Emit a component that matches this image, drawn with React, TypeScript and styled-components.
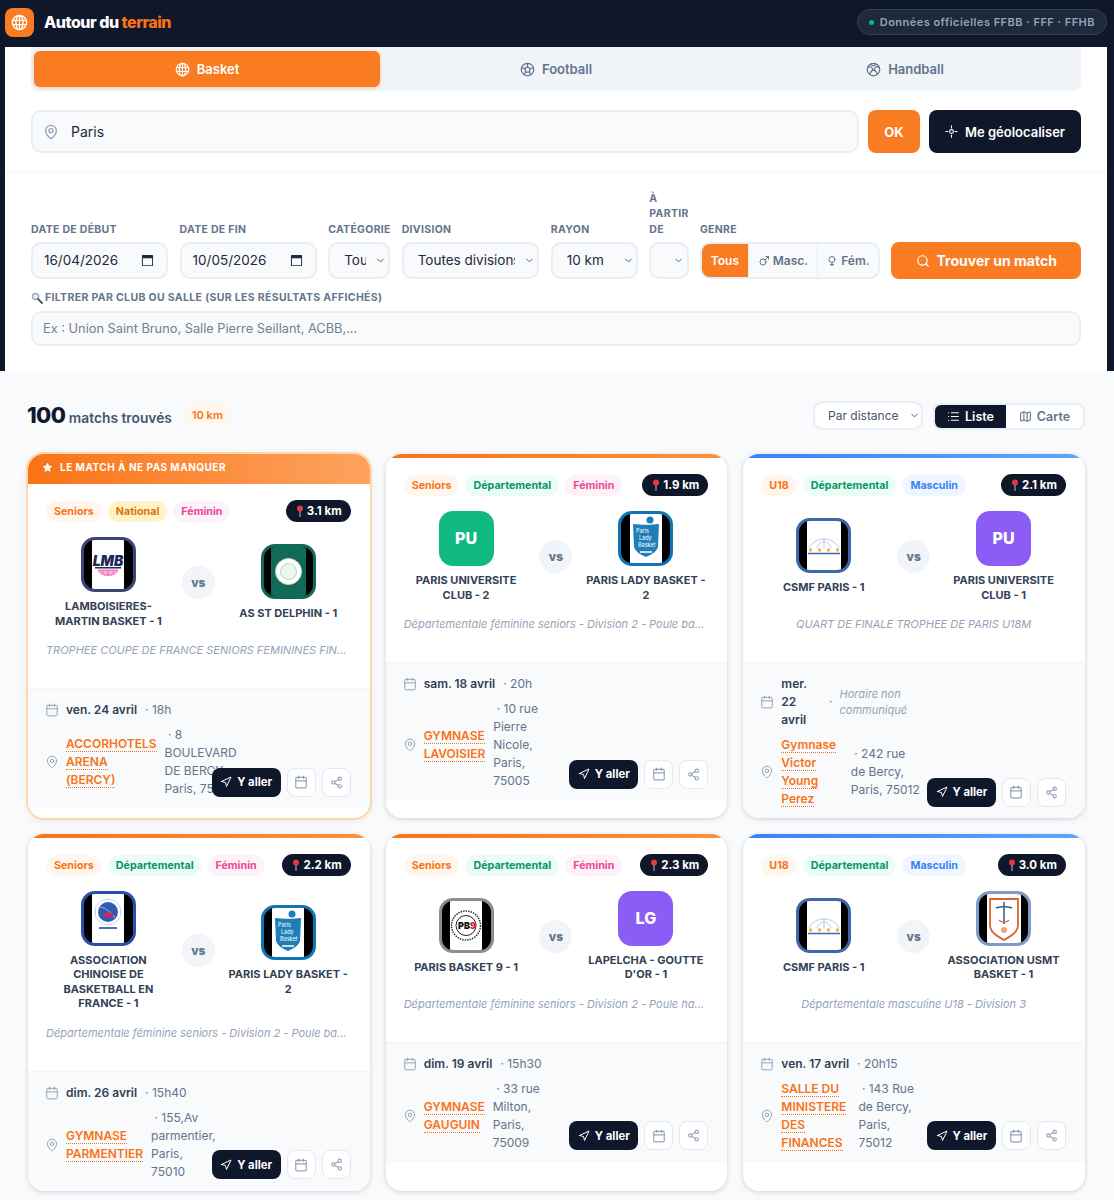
import React from "react";
import styled, { createGlobalStyle } from "styled-components";
import {
  Calendar,
  ChevronDown,
  List,
  Map as MapIcon,
  MapPin,
  Mars,
  Navigation,
  Search,
  Share2,
  Star,
  Venus,
} from "lucide-react";

const GlobalStyle = createGlobalStyle`
  * { box-sizing: border-box; }
  body {
    margin: 0;
    background: #f8fafc;
    color: #0f172a;
    font-family: Inter, "Liberation Sans", sans-serif;
  }
  input, select, button { font-family: inherit; }
`;

const Page = styled.div`
  width: 1114px;
`;

const Header = styled.header`
  height: 47px;
  background: #0f172a;
  display: flex;
  align-items: center;
  justify-content: space-between;
  padding: 0 7px 3px 5px;
`;

const Brand = styled.div`
  display: flex;
  align-items: center;
  gap: 10px;
`;

const BrandLogo = styled.div`
  width: 29px;
  height: 29px;
  border-radius: 8px;
  background: #f97b22;
  color: #fff;
  display: flex;
  align-items: center;
  justify-content: center;
`;

const BrandName = styled.div`
  font-size: 16px;
  font-weight: 800;
  letter-spacing: -0.5px;
  color: #fff;
  span {
    color: #f97316;
  }
`;

const SourceBadge = styled.div`
  height: 26px;
  display: flex;
  align-items: center;
  gap: 6px;
  padding: 0 11px;
  border-radius: 13px;
  background: #1e293b;
  border: 1px solid #334155;
  color: #94a3b8;
  font-size: 11px;
  font-weight: 600;
  letter-spacing: 0.47px;
  i {
    width: 5px;
    height: 5px;
    border-radius: 50%;
    background: #10b981;
  }
`;

const PanelWrap = styled.div`
  background: #0f172a;
  padding: 0 7px 0 5px;
`;

const Panel = styled.section`
  background: #fff;
`;

const SearchBlock = styled.div`
  padding: 0 26px 19px;
  border-bottom: 1px solid #f1f5f9;
`;

const SportTabs = styled.div`
  display: grid;
  grid-template-columns: repeat(3, 1fr);
  gap: 3px;
  height: 44px;
  padding: 4px 3px;
  background: #f1f5f9;
  border-radius: 0 0 8px 8px;
  margin-bottom: 19px;
`;

const SportTab = styled.button<{ $active?: boolean }>`
  display: flex;
  align-items: center;
  justify-content: center;
  gap: 7px;
  border: 0;
  border-radius: 6px;
  font-size: 13px;
  font-weight: 600;
  background: ${(p) => (p.$active ? "#f97b22" : "transparent")};
  color: ${(p) => (p.$active ? "#fff" : "#64748b")};
  box-shadow: ${(p) => (p.$active ? "0 1px 4px rgba(249,115,22,.35)" : "none")};
`;

const SearchRow = styled.div`
  display: flex;
  gap: 9px;
`;

const SearchField = styled.div`
  position: relative;
  flex: 1;
  svg {
    position: absolute;
    left: 12px;
    top: 14px;
    color: #94a3b8;
  }
`;

const SearchInput = styled.input`
  width: 100%;
  height: 43px;
  border: 2px solid #e8eef6;
  border-radius: 10px;
  background: #f8fafc;
  padding: 0 38px;
  font-size: 14px;
  color: #1e293b;
  outline: none;
`;

const OkButton = styled.button`
  width: 52px;
  height: 43px;
  border: 0;
  border-radius: 8px;
  background: #f97b22;
  color: #fff;
  font-size: 13px;
  font-weight: 700;
`;

const GeoButton = styled.button`
  width: 152px;
  height: 43px;
  border: 0;
  border-radius: 8px;
  background: #0f172a;
  color: #fff;
  font-size: 13px;
  font-weight: 600;
  display: flex;
  align-items: center;
  justify-content: center;
  gap: 7px;
`;

const FilterBlock = styled.div`
  padding: 18px 26px 25px;
`;

const FilterRow = styled.div`
  display: flex;
  align-items: flex-end;
  gap: 11.57px;
  margin-bottom: 11px;
`;

const Field = styled.label<{ $w: number }>`
  display: flex;
  flex-direction: column;
  gap: 5px;
  width: ${(p) => p.$w}px;
  flex: none;
`;

const FieldLabel = styled.span`
  font-size: 10.5px;
  line-height: 15.4px;
  font-weight: 700;
  letter-spacing: 0.3px;
  text-transform: uppercase;
  color: #64748b;
`;

const DateBox = styled.div`
  height: 37px;
  border: 2px solid #e8eef6;
  border-radius: 10px;
  background: #f8fafc;
  display: flex;
  align-items: center;
  justify-content: space-between;
  padding: 0 12px 1px 11px;
  font-size: 13.5px;
  color: #1e293b;
`;

const SelectWrap = styled.div`
  position: relative;
  svg {
    position: absolute;
    right: 4px;
    top: 13px;
    color: #475569;
    pointer-events: none;
  }
`;

const NativeSelect = styled.select`
  appearance: none;
  width: 100%;
  height: 37px;
  border: 2px solid #e8eef6;
  border-radius: 10px;
  background: #f8fafc;
  padding: 0 22px 1px 14px;
  font-size: 13.5px;
  color: #1e293b;
  outline: none;
`;

const GenreGroup = styled.div`
  height: 37px;
  display: flex;
  border: 2px solid #e8eef6;
  border-radius: 10px;
  background: #f8fafc;
  overflow: hidden;
`;

const GenreOption = styled.button<{ $active?: boolean; $w: number }>`
  width: ${(p) => p.$w}px;
  flex: none;
  border: 0;
  border-right: 1px solid #e8eef6;
  display: flex;
  align-items: center;
  justify-content: center;
  gap: 3px;
  padding: 0;
  font-size: 12px;
  font-weight: 600;
  background: ${(p) => (p.$active ? "#f97b22" : "transparent")};
  color: ${(p) => (p.$active ? "#fff" : "#64748b")};
  &:last-child {
    border-right: 0;
  }
`;

const FindButton = styled.button`
  flex: 1;
  height: 37px;
  border: 0;
  border-radius: 8px;
  background: #f97b22;
  color: #fff;
  font-size: 14px;
  font-weight: 700;
  display: flex;
  align-items: center;
  justify-content: center;
  gap: 7px;
`;

const ClubLabel = styled(FieldLabel)`
  display: flex;
  align-items: center;
  gap: 2px;
  margin-bottom: 5.6px;
  letter-spacing: 0.34px;
`;

const ClubInput = styled.input`
  width: 100%;
  height: 35px;
  border: 2px solid #e8eef6;
  border-radius: 10px;
  background: #f8fafc;
  padding: 0 10px;
  font-size: 12.8px;
  outline: none;
  &::placeholder {
    color: #757f8d;
    opacity: 1;
  }
`;

const Results = styled.section`
  padding: 30px 29px 10px 28px;
`;

const Toolbar = styled.div`
  display: flex;
  align-items: center;
  justify-content: space-between;
  height: 29px;
  margin-bottom: 24px;
`;

const Count = styled.div`
  display: flex;
  align-items: center;
  gap: 11px;
  margin-top: -1px;
`;

const CountText = styled.div`
  font-size: 13.8px;
  font-weight: 600;
  color: #475569;
  margin-left: -1px;
  b {
    font-size: 22px;
    font-weight: 800;
    letter-spacing: -0.6px;
    color: #0f172a;
  }
`;

const RadiusBadge = styled.span`
  height: 22px;
  padding: 0 9px;
  display: flex;
  align-items: center;
  border-radius: 11px;
  background: #fff7ed;
  color: #f97316;
  font-size: 11px;
  font-weight: 600;
`;

const ToolbarRight = styled.div`
  display: flex;
  align-items: flex-end;
  gap: 10px;
`;

const SortWrap = styled(SelectWrap)`
  width: 110px;
  svg {
    top: 9px;
    right: 3px;
  }
`;

const SortSelect = styled(NativeSelect)`
  height: 29px;
  background: #fff;
  padding: 0 18px 0 13px;
  font-size: 12px;
  color: #475569;
`;

const ViewToggle = styled.div`
  display: flex;
  height: 27px;
  border: 2px solid #e8eef6;
  border-radius: 8px;
  overflow: hidden;
  background: #fff;
`;

const ViewOption = styled.button<{ $active?: boolean }>`
  width: ${(p) => (p.$active ? 71 : 77)}px;
  border: 0;
  display: flex;
  align-items: center;
  justify-content: center;
  gap: 5px;
  padding: 0;
  font-size: 12.5px;
  font-weight: 600;
  background: ${(p) => (p.$active ? "#0f172a" : "#fff")};
  color: ${(p) => (p.$active ? "#fff" : "#64748b")};
`;

const CardGrid = styled.div`
  display: grid;
  grid-template-columns: repeat(3, 1fr);
  gap: 16px;
`;

const CardShell = styled.article<{ $featured?: boolean }>`
  display: flex;
  flex-direction: column;
  background: #fff;
  border-radius: 16px;
  overflow: hidden;
  box-shadow: ${(p) =>
    p.$featured
      ? "0 0 0 2px #fed7aa, 0 2px 10px rgba(15,23,42,.08)"
      : "0 1px 4px rgba(15,23,42,.14), 0 2px 10px rgba(15,23,42,.04)"};
`;

const Stripe = styled.div<{ $tone: "orange" | "blue" }>`
  height: 4px;
  background: ${(p) =>
    p.$tone === "orange"
      ? "linear-gradient(90deg, #f97316, #fb923c)"
      : "linear-gradient(90deg, #3b82f6, #60a5fa)"};
`;

const Banner = styled.div`
  height: 30px;
  display: flex;
  align-items: center;
  gap: 7px;
  padding: 0 14px 4px;
  background: linear-gradient(90deg, #f97316, #fda35f);
  color: #fff;
  font-size: 10px;
  font-weight: 700;
  letter-spacing: 0.5px;
`;

const CardBody = styled.div`
  padding: 16px 19px 32px 18px;
`;

const TagRow = styled.div`
  display: flex;
  align-items: center;
  gap: 6px;
  height: 22px;
  margin-bottom: 15px;
`;

const tagColors = {
  seniors: ["#fff7ed", "#f97316"],
  national: ["#fef3c7", "#d97706"],
  dep: ["#ecfdf5", "#059669"],
  fem: ["#fdf2f8", "#ec4899"],
  masc: ["#eff6ff", "#3b82f6"],
};

type TagKind = keyof typeof tagColors;

const Tag = styled.span<{ $kind: TagKind }>`
  height: 21px;
  display: flex;
  align-items: center;
  padding: 0 8px;
  border-radius: 11px;
  font-size: 10.7px;
  font-weight: 700;
  background: ${(p) => tagColors[p.$kind][0]};
  color: ${(p) => tagColors[p.$kind][1]};
`;

const Distance = styled.span`
  margin-left: auto;
  height: 22px;
  display: flex;
  align-items: center;
  gap: 2px;
  padding: 0 9px;
  border-radius: 11px;
  background: #0f172a;
  color: #fff;
  font-size: 11.5px;
  font-weight: 700;
`;

const Teams = styled.div`
  display: grid;
  grid-template-columns: 1fr 33px 1fr;
  align-items: center;
  gap: 11px;
  margin-bottom: 15px;
`;

const Team = styled.div`
  display: flex;
  flex-direction: column;
  align-items: center;
  gap: 7px;
  text-align: center;
`;

const TeamName = styled.div`
  font-size: 11px;
  line-height: 14.4px;
  font-weight: 700;
  color: #334155;
`;

const Versus = styled.div`
  width: 33px;
  height: 33px;
  border-radius: 50%;
  background: #f1f5f9;
  color: #64748b;
  font-size: 12px;
  font-weight: 800;
  display: flex;
  align-items: center;
  justify-content: center;
`;

const InitialsLogo = styled.div<{ $bg: string }>`
  width: 55px;
  height: 55px;
  border-radius: 14px;
  padding-bottom: 2px;
  background: ${(p) => p.$bg};
  color: #fff;
  font-size: 16px;
  font-weight: 800;
  display: flex;
  align-items: center;
  justify-content: center;
`;

const FrameLogo = styled.div<{ $border: string; $bg?: string }>`
  width: 55px;
  height: 55px;
  border-radius: 14px;
  border: 3px solid ${(p) => p.$border};
  background: #000;
  overflow: hidden;
  display: flex;
  align-items: center;
  justify-content: center;
  svg {
    display: block;
    background: ${(p) => p.$bg || "#fff"};
  }
`;

const Competition = styled.div`
  font-size: 11px;
  line-height: 14px;
  font-style: italic;
  color: #94a3b8;
  text-align: center;
  white-space: nowrap;
  overflow: hidden;
  text-overflow: ellipsis;
`;

const CardFooter = styled.div`
  display: flex;
  align-items: flex-end;
  gap: 6px;
  padding: 12px 19px 10px 18px;
  background: #f8fafc;
  border-top: 1px solid #f1f5f9;
  margin-top: -1px;
`;

const FooterInfo = styled.div`
  flex: 1;
  min-width: 0;
  display: flex;
  flex-direction: column;
  gap: 7px;
`;

const InfoRow = styled.div`
  display: flex;
  align-items: center;
  gap: 8px;
  font-size: 12px;
  line-height: 18px;
  color: #64748b;
  > svg {
    flex: none;
    margin: 0 -1px;
    color: #94a3b8;
  }
`;

const MatchDate = styled.span`
  font-weight: 600;
  color: #334155;
`;

const UnknownTime = styled.span`
  flex: 0 1 165px;
  min-width: 0;
  display: flex;
  align-items: center;
  gap: 7px;
  em {
    font-size: 11px;
    line-height: 16.5px;
    color: #94a3b8;
  }
`;

const Venue = styled.span`
  flex-shrink: 1.03;
  span {
    font-weight: 600;
    color: #f97316;
    border-bottom: 1px dotted #f97316;
  }
`;

const Actions = styled.div`
  flex: none;
  display: flex;
  align-items: center;
  gap: 6px;
  margin-bottom: 1.5px;
`;

const GoButton = styled.button`
  width: 69px;
  height: 29px;
  border: 0;
  border-radius: 8px;
  background: #0f172a;
  color: #fff;
  font-size: 11.3px;
  font-weight: 700;
  display: flex;
  align-items: center;
  justify-content: center;
  gap: 5px;
  padding: 0;
`;

const IconButton = styled.button`
  width: 29px;
  height: 29px;
  border: 1px solid #e2e8f0;
  border-radius: 8px;
  background: #fff;
  color: #94a3b8;
  display: flex;
  align-items: center;
  justify-content: center;
  padding: 0;
`;

const BasketIcon = ({ size = 15 }: { size?: number }) => (
  <svg width={size} height={size} viewBox="0 0 24 24" fill="none" stroke="currentColor" strokeWidth="2" strokeLinecap="round">
    <circle cx="12" cy="12" r="10" />
    <ellipse cx="12" cy="12" rx="5" ry="10" />
    <path d="M2.5 9h19M2.5 15h19M12 2v20" strokeWidth="1.6" />
  </svg>
);

const FootballIcon = () => (
  <svg width="15" height="15" viewBox="0 0 24 24" fill="none" stroke="currentColor" strokeWidth="2" strokeLinejoin="round" strokeLinecap="round">
    <circle cx="12" cy="12" r="10" />
    <path d="M12 7.5l4.5 3.2-1.7 5.3H9.2l-1.7-5.3zM12 7.5V2.5M16.5 10.7l4.8-1.5M14.8 16l3 4M9.2 16l-3 4M7.5 10.7L2.7 9.2" />
  </svg>
);

const HandballIcon = () => (
  <svg width="15" height="15" viewBox="0 0 24 24" fill="none" stroke="currentColor" strokeWidth="2" strokeLinecap="round">
    <circle cx="12" cy="12" r="10" />
    <path d="M3 9c4-3 7-1 8 4M21 9c-4-3-7-1-8 4M11 13c.7.5 1.3.5 2 0M7 4c3 2 7 2 10 0M6 19c1-3 2-5 5-6M18 19c-1-3-2-5-5-6" />
  </svg>
);

const LocateIcon = () => (
  <svg width="13" height="13" viewBox="0 0 24 24" fill="none" stroke="currentColor" strokeWidth="2" strokeLinecap="round">
    <circle cx="12" cy="12" r="3.5" />
    <path d="M1.5 12h4M18.5 12h4M12 1.5v4M12 18.5v4" />
  </svg>
);

const NativeCalendar = () => (
  <svg width="13" height="13" viewBox="0 0 14 14">
    <path fill="#1e293b" d="M2 1h10a1 1 0 0 1 1 1v10a1 1 0 0 1-1 1H2a1 1 0 0 1-1-1V2a1 1 0 0 1 1-1zm0 3.5V12h10V4.5z" />
  </svg>
);

const Pin = () => (
  <svg width="10" height="12" viewBox="0 0 10 12">
    <circle cx="5" cy="3.5" r="3" fill="#e5383b" />
    <path d="M5 6v6" stroke="#94a3b8" strokeWidth="1.2" />
  </svg>
);

const Loupe = () => (
  <svg width="12" height="12" viewBox="0 0 12 12" fill="none">
    <circle cx="4.5" cy="4.5" r="3.2" fill="#dbeafe" stroke="#94a3b8" strokeWidth="1.2" />
    <path d="M7 7l4 4" stroke="#475569" strokeWidth="1.8" strokeLinecap="round" />
  </svg>
);

// the club logos are letterboxed pictures: a white column on black
const LmbArt = () => (
  <svg width="32" height="49" viewBox="0 0 32 49">
    <text x="16" y="26" textAnchor="middle" fontSize="14" fontWeight="900" fontStyle="italic" fill="#1e2a5a" fontFamily="Inter, sans-serif">LMB</text>
    <rect x="3" y="27" width="26" height="1.5" fill="#1e2a5a" />
    <path d="M6 30c2 7 18 7 20 0zM16 30v6M10 30c1 3 2 5 3 5.5M22 30c-1 3-2 5-3 5.5" fill="#f7b5dc" stroke="#ec4899" strokeWidth=".7" />
  </svg>
);

const DelphinArt = () => (
  <svg width="35" height="49" viewBox="0 0 35 49">
    <circle cx="17.5" cy="24.5" r="13" fill="#fff" stroke="#cbd5c9" />
    <circle cx="17.5" cy="24.5" r="8" fill="#eef7ef" stroke="#9fcfaa" strokeWidth=".8" />
  </svg>
);

const LadyArt = () => (
  <svg width="32" height="49" viewBox="0 0 32 49">
    <path d="M3 10c8 1 18 1 26 0l-1 23c-2 6-8 8-12 10-4-2-10-4-12-10z" fill="#1d7eb8" />
    <circle cx="20" cy="6" r="3.5" fill="#1d7eb8" />
    <g fontSize="5.5" fill="#fff" fontFamily="Inter, sans-serif">
      <text x="6" y="19">Paris</text>
      <text x="9" y="26">Lady</text>
      <text x="8" y="33">Basket</text>
    </g>
    <path d="M10 38h12" stroke="#fff" strokeWidth="1.5" />
  </svg>
);

const CsmfArt = () => (
  <svg width="34" height="49" viewBox="0 0 34 49">
    <path d="M2 27c6-12 24-12 30 0M10 27c2-8 12-8 14 0M17 17v10" stroke="#a5b8dc" strokeWidth=".8" fill="none" />
    <path d="M2 29h30" stroke="#f2b63c" strokeWidth="3" strokeDasharray="3 6" />
    <path d="M1 32.5h32" stroke="#3a6cb5" strokeWidth="1.5" />
  </svg>
);

const ChinoiseArt = () => (
  <svg width="32" height="49" viewBox="0 0 32 49">
    <circle cx="16" cy="18" r="13" fill="none" stroke="#b8c6e4" strokeWidth=".8" />
    <circle cx="16" cy="18" r="10" fill="#2f5cb0" />
    <path d="M8 13c6 1 12 6 15 11" stroke="#c9d6f0" strokeWidth=".7" fill="none" />
    <rect x="12" y="19" width="9" height="4" fill="#e11d48" />
    <rect x="7" y="33" width="18" height="2" fill="#4f6fb5" />
  </svg>
);

const Pb9Art = () => (
  <svg width="32" height="49" viewBox="0 0 32 49">
    <circle cx="16" cy="24.5" r="14.5" fill="#fff" stroke="#333" strokeWidth="1.5" strokeDasharray="1.5 1" />
    <circle cx="16" cy="24.5" r="10" fill="none" stroke="#222" strokeWidth="1" />
    <text x="14" y="28" textAnchor="middle" fontSize="9" fontWeight="900" fill="#111" fontFamily="Inter, sans-serif">PB</text>
    <text x="23" y="28" textAnchor="middle" fontSize="9" fontWeight="900" fill="#d11f2a" fontFamily="Inter, sans-serif">9</text>
  </svg>
);

const UsmtArt = () => (
  <svg width="34" height="49" viewBox="0 0 34 49">
    <path d="M3 5h28v26c0 8-9 12-14 15-5-3-14-7-14-15z" fill="#fff" stroke="#d9662c" strokeWidth="1.8" />
    <path d="M17 8v22M9 14c5-2 11-2 16 0" stroke="#3b5a8c" strokeWidth="1.5" fill="none" />
    <circle cx="17" cy="36" r="3" fill="#e9a67a" />
    <path d="M12 26c3 3 7 3 10 0" stroke="#d9662c" strokeWidth="1.2" fill="none" />
  </svg>
);

type Logo = { initials: string; color: string } | { border: string; art: React.ReactNode; bg?: string };

interface MatchData {
  featured?: boolean;
  tone: "orange" | "blue";
  tags: [string, TagKind][];
  distance: string;
  home: { name: string; logo: Logo };
  away: { name: string; logo: Logo };
  competition: string;
  date: string;
  time?: string;
  venue: string;
  address: string;
}

const LadyLogo: Logo = { border: "#0f75b5", art: <LadyArt /> };
const CsmfLogo: Logo = { border: "#3e68ab", art: <CsmfArt /> };

const SENIORS_DEP_FEM: [string, TagKind][] = [
  ["Seniors", "seniors"],
  ["Départemental", "dep"],
  ["Féminin", "fem"],
];
const U18_DEP_MASC: [string, TagKind][] = [
  ["U18", "seniors"],
  ["Départemental", "dep"],
  ["Masculin", "masc"],
];

const matches: MatchData[] = [
  {
    featured: true,
    tone: "orange",
    tags: [
      ["Seniors", "seniors"],
      ["National", "national"],
      ["Féminin", "fem"],
    ],
    distance: "3.1 km",
    home: { name: "LAMBOISIERES-MARTIN BASKET - 1", logo: { border: "#3d4477", art: <LmbArt /> } },
    away: { name: "AS ST DELPHIN - 1", logo: { border: "#116a58", art: <DelphinArt />, bg: "#116a58" } },
    competition: "TROPHEE COUPE DE FRANCE SENIORS FEMININES FINALE",
    date: "ven. 24 avril",
    time: "18h",
    venue: "ACCORHOTELS ARENA (BERCY)",
    address: "8 BOULEVARD DE BERCY, Paris, 75012",
  },
  {
    tone: "orange",
    tags: SENIORS_DEP_FEM,
    distance: "1.9 km",
    home: { name: "PARIS UNIVERSITE CLUB - 2", logo: { initials: "PU", color: "#10b981" } },
    away: { name: "PARIS LADY BASKET - 2", logo: LadyLogo },
    competition: "Départementale féminine seniors - Division 2 - Poule basse",
    date: "sam. 18 avril",
    time: "20h",
    venue: "GYMNASE LAVOISIER",
    address: "10 rue Pierre Nicole, Paris, 75005",
  },
  {
    tone: "blue",
    tags: U18_DEP_MASC,
    distance: "2.1 km",
    home: { name: "CSMF PARIS - 1", logo: CsmfLogo },
    away: { name: "PARIS UNIVERSITE CLUB - 1", logo: { initials: "PU", color: "#8b5cf6" } },
    competition: "QUART DE FINALE TROPHEE DE PARIS U18M",
    date: "mer. 22 avril",
    venue: "Gymnase Victor Young Perez",
    address: "242 rue de Bercy, Paris, 75012",
  },
  {
    tone: "orange",
    tags: SENIORS_DEP_FEM,
    distance: "2.2 km",
    home: { name: "ASSOCIATION CHINOISE DE BASKETBALL EN FRANCE - 1", logo: { border: "#2d4fa8", art: <ChinoiseArt /> } },
    away: { name: "PARIS LADY BASKET - 2", logo: LadyLogo },
    competition: "Départementale féminine seniors - Division 2 - Poule basse",
    date: "dim. 26 avril",
    time: "15h40",
    venue: "GYMNASE PARMENTIER",
    address: "155,Av parmentier, Paris, 75010",
  },
  {
    tone: "orange",
    tags: SENIORS_DEP_FEM,
    distance: "2.3 km",
    home: { name: "PARIS BASKET 9 - 1", logo: { border: "#8c8c94", art: <Pb9Art /> } },
    away: { name: "LAPELCHA - GOUTTE D'OR - 1", logo: { initials: "LG", color: "#8b5cf6" } },
    competition: "Départementale féminine seniors - Division 2 - Poule haute",
    date: "dim. 19 avril",
    time: "15h30",
    venue: "GYMNASE GAUGUIN",
    address: "33 rue Milton, Paris, 75009",
  },
  {
    tone: "blue",
    tags: U18_DEP_MASC,
    distance: "3.0 km",
    home: { name: "CSMF PARIS - 1", logo: CsmfLogo },
    away: { name: "ASSOCIATION USMT BASKET - 1", logo: { border: "#7e9cc8", art: <UsmtArt /> } },
    competition: "Départementale masculine U18 - Division 3",
    date: "ven. 17 avril",
    time: "20h15",
    venue: "SALLE DU MINISTERE DES FINANCES",
    address: "143 Rue de Bercy, Paris, 75012",
  },
];

const TeamLogo = ({ logo }: { logo: Logo }) =>
  "initials" in logo ? (
    <InitialsLogo $bg={logo.color}>{logo.initials}</InitialsLogo>
  ) : (
    <FrameLogo $border={logo.border} $bg={logo.bg}>
      {logo.art}
    </FrameLogo>
  );

const MatchCard = ({ match }: { match: MatchData }) => (
  <CardShell $featured={match.featured}>
    {match.featured ? (
      <Banner>
        <Star size={11} fill="#fff" strokeWidth={0} />
        LE MATCH À NE PAS MANQUER
      </Banner>
    ) : (
      <Stripe $tone={match.tone} />
    )}
    <CardBody>
      <TagRow>
        {match.tags.map(([label, kind]) => (
          <Tag key={label} $kind={kind}>
            {label}
          </Tag>
        ))}
        <Distance>
          <Pin />
          {match.distance}
        </Distance>
      </TagRow>
      <Teams>
        <Team>
          <TeamLogo logo={match.home.logo} />
          <TeamName>{match.home.name}</TeamName>
        </Team>
        <Versus>vs</Versus>
        <Team>
          <TeamLogo logo={match.away.logo} />
          <TeamName>{match.away.name}</TeamName>
        </Team>
      </Teams>
      <Competition>{match.competition}</Competition>
    </CardBody>
    <CardFooter>
      <FooterInfo>
        <InfoRow>
          <Calendar size={14} strokeWidth={1.7} />
          <MatchDate>{match.date}</MatchDate>
          {match.time ? (
            <span>· {match.time}</span>
          ) : (
            <UnknownTime>
              ·<em>Horaire non communiqué</em>
            </UnknownTime>
          )}
        </InfoRow>
        <InfoRow>
          <MapPin size={14} strokeWidth={1.7} />
          <Venue>
            <span>{match.venue}</span>
          </Venue>
          <span>&nbsp;· {match.address}</span>
        </InfoRow>
      </FooterInfo>
      <Actions>
        <GoButton>
          <Navigation size={12} />Y aller
        </GoButton>
        <IconButton>
          <Calendar size={14} />
        </IconButton>
        <IconButton>
          <Share2 size={13} />
        </IconButton>
      </Actions>
    </CardFooter>
  </CardShell>
);

const App = () => (
  <Page>
    <GlobalStyle />
    <Header>
      <Brand>
        <BrandLogo>
          <BasketIcon size={17} />
        </BrandLogo>
        <BrandName>
          Autour du <span>terrain</span>
        </BrandName>
      </Brand>
      <SourceBadge>
        <i />
        Données officielles FFBB · FFF · FFHB
      </SourceBadge>
    </Header>
    <PanelWrap>
      <Panel>
        <SearchBlock>
          <SportTabs>
            <SportTab $active>
              <BasketIcon />
              Basket
            </SportTab>
            <SportTab>
              <FootballIcon />
              Football
            </SportTab>
            <SportTab>
              <HandballIcon />
              Handball
            </SportTab>
          </SportTabs>
          <SearchRow>
            <SearchField>
              <MapPin size={16} />
              <SearchInput defaultValue="Paris" />
            </SearchField>
            <OkButton>OK</OkButton>
            <GeoButton>
              <LocateIcon />
              Me géolocaliser
            </GeoButton>
          </SearchRow>
        </SearchBlock>
        <FilterBlock>
          <FilterRow>
            <Field $w={137}>
              <FieldLabel>Date de début</FieldLabel>
              <DateBox>
                16/04/2026
                <NativeCalendar />
              </DateBox>
            </Field>
            <Field $w={137}>
              <FieldLabel>Date de fin</FieldLabel>
              <DateBox>
                10/05/2026
                <NativeCalendar />
              </DateBox>
            </Field>
            <Field $w={62}>
              <FieldLabel>Catégorie</FieldLabel>
              <SelectWrap>
                <NativeSelect>
                  <option>Toutes</option>
                </NativeSelect>
                <ChevronDown size={11} />
              </SelectWrap>
            </Field>
            <Field $w={137.5}>
              <FieldLabel>Division</FieldLabel>
              <SelectWrap>
                <NativeSelect>
                  <option>Toutes divisions</option>
                </NativeSelect>
                <ChevronDown size={11} />
              </SelectWrap>
            </Field>
            <Field $w={87}>
              <FieldLabel>Rayon</FieldLabel>
              <SelectWrap>
                <NativeSelect>
                  <option>10 km</option>
                </NativeSelect>
                <ChevronDown size={11} />
              </SelectWrap>
            </Field>
            <Field $w={39}>
              <FieldLabel>À partir de</FieldLabel>
              <SelectWrap>
                <NativeSelect>
                  <option></option>
                </NativeSelect>
                <ChevronDown size={11} />
              </SelectWrap>
            </Field>
            <Field $w={180}>
              <FieldLabel>Genre</FieldLabel>
              <GenreGroup>
                <GenreOption $active $w={47}>
                  Tous
                </GenreOption>
                <GenreOption $w={69}>
                  <Mars size={12} />
                  Masc.
                </GenreOption>
                <GenreOption $w={60}>
                  <Venus size={12} />
                  Fém.
                </GenreOption>
              </GenreGroup>
            </Field>
            <FindButton>
              <Search size={14} />
              Trouver un match
            </FindButton>
          </FilterRow>
          <ClubLabel>
            <Loupe />
            Filtrer par club ou salle (sur les résultats affichés)
          </ClubLabel>
          <ClubInput placeholder="Ex : Union Saint Bruno, Salle Pierre Seillant, ACBB,..." />
        </FilterBlock>
      </Panel>
    </PanelWrap>
    <Results>
      <Toolbar>
        <Count>
          <CountText>
            <b>100</b> matchs trouvés
          </CountText>
          <RadiusBadge>10 km</RadiusBadge>
        </Count>
        <ToolbarRight>
          <SortWrap>
            <SortSelect>
              <option>Par distance</option>
            </SortSelect>
            <ChevronDown size={11} />
          </SortWrap>
          <ViewToggle>
            <ViewOption $active>
              <List size={13} />
              Liste
            </ViewOption>
            <ViewOption>
              <MapIcon size={13} />
              Carte
            </ViewOption>
          </ViewToggle>
        </ToolbarRight>
      </Toolbar>
      <CardGrid>
        {matches.map((match) => (
          <MatchCard key={match.home.name + match.date} match={match} />
        ))}
      </CardGrid>
    </Results>
  </Page>
);

export default App;
